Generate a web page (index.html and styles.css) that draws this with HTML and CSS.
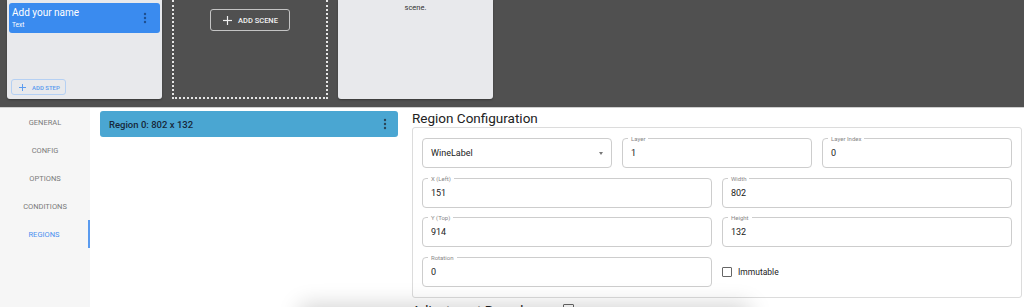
FILE: index.html
```html
<!DOCTYPE html>
<html lang="en">
<head>
  <meta charset="UTF-8">
  <title>Scene Editor</title>
  <link rel="stylesheet" href="styles.css">
</head>
<body>
  <!-- Scenes strip -->
  <div class="scenes">
    <div class="scene-card">
      <div class="step-item">
        <div class="step-text">
          <div class="step-name">Add your name</div>
          <div class="step-type">Text</div>
        </div>
        <svg class="kebab" width="4" height="12" viewBox="0 0 4 12">
          <circle cx="2" cy="2" r="1.2"></circle>
          <circle cx="2" cy="6" r="1.2"></circle>
          <circle cx="2" cy="10" r="1.2"></circle>
        </svg>
      </div>
      <button class="btn-add-step">
        <svg width="7" height="7" viewBox="0 0 10 10" fill="none" stroke="currentColor" stroke-width="1.4">
          <line x1="5" y1="0" x2="5" y2="10"></line>
          <line x1="0" y1="5" x2="10" y2="5"></line>
        </svg>
        <span>ADD STEP</span>
      </button>
    </div>

    <div class="scene-drop">
      <button class="btn-add-scene">
        <svg width="9" height="9" viewBox="0 0 10 10" fill="none" stroke="currentColor" stroke-width="1.3">
          <line x1="5" y1="0" x2="5" y2="10"></line>
          <line x1="0" y1="5" x2="10" y2="5"></line>
        </svg>
        <span>ADD SCENE</span>
      </button>
    </div>

    <div class="scene-card empty">
      <div class="empty-text">Add a step to<br>scene.</div>
    </div>
  </div>

  <!-- Editor -->
  <div class="editor">
    <div class="tabs">
      <div class="tab">GENERAL</div>
      <div class="tab">CONFIG</div>
      <div class="tab">OPTIONS</div>
      <div class="tab">CONDITIONS</div>
      <div class="tab active">REGIONS</div>
    </div>

    <div class="region-list">
      <div class="region-item">
        <span>Region 0: 802 x 132</span>
        <svg class="kebab dark" width="4" height="12" viewBox="0 0 4 12">
          <circle cx="2" cy="2" r="1.2"></circle>
          <circle cx="2" cy="6" r="1.2"></circle>
          <circle cx="2" cy="10" r="1.2"></circle>
        </svg>
      </div>
    </div>

    <div class="region-config">
      <h2 class="section-title">Region Configuration</h2>
      <div class="config-box">
        <div class="row thirds">
          <div class="field select">
            <span class="value">WineLabel</span>
            <span class="arrow"></span>
          </div>
          <div class="field">
            <label>Layer</label>
            <span class="value">1</span>
          </div>
          <div class="field">
            <label>Layer Index</label>
            <span class="value">0</span>
          </div>
        </div>
        <div class="row halves">
          <div class="field">
            <label>X (Left)</label>
            <span class="value">151</span>
          </div>
          <div class="field">
            <label>Width</label>
            <span class="value">802</span>
          </div>
        </div>
        <div class="row halves">
          <div class="field">
            <label>Y (Top)</label>
            <span class="value">914</span>
          </div>
          <div class="field">
            <label>Height</label>
            <span class="value">132</span>
          </div>
        </div>
        <div class="row halves">
          <div class="field">
            <label>Rotation</label>
            <span class="value">0</span>
          </div>
          <div class="checkbox-row">
            <span class="checkbox"></span>
            <span>Immutable</span>
          </div>
        </div>
      </div>
      <div class="boundary">
        <span>Adjustment Boundary:</span>
        <span class="checkbox big"></span>
      </div>
    </div>
  </div>

  <div class="floating-shadow"></div>
</body>
</html>
```

FILE: styles.css
```css
* {
  margin: 0;
  padding: 0;
  box-sizing: border-box;
}

body {
  font-family: Roboto, "Liberation Sans", sans-serif;
  background-color: white;
  color: #222;
  width: 1024px;
  height: 307px;
  overflow: hidden;
}

button {
  font-family: inherit;
  background: none;
  cursor: pointer;
}

/* Scenes strip */
.scenes {
  display: flex;
  gap: 10px;
  height: 108px;
  padding: 0 0 8px 7px;
  background-color: #505050;
  border-bottom: 1px solid #cfcfcf;
}

.scene-card {
  display: flex;
  flex-direction: column;
  justify-content: space-between;
  width: 155px;
  padding: 3px 2px 4px;
  background-color: #e8e9ec;
  border-radius: 0 0 3px 3px;
  box-shadow: 0 1px 2px rgba(0, 0, 0, 0.3);
}

.step-item {
  display: flex;
  justify-content: space-between;
  align-items: center;
  height: 30px;
  padding: 0 13px 0 3px;
  background-color: #3a8bef;
  border-radius: 3px;
  color: white;
}

.step-name {
  font-size: 10px;
  line-height: 13px;
}

.step-type {
  font-size: 6.5px;
  line-height: 10px;
  margin-top: 1px;
}

.kebab {
  fill: #1f4f8f;
}

.kebab.dark {
  fill: #2a4658;
}

.btn-add-step {
  display: flex;
  align-items: center;
  gap: 6px;
  align-self: flex-start;
  height: 16px;
  margin-left: 2px;
  padding: 0 5px 0 7px;
  border: 1px solid #b5d0f3;
  border-radius: 3px;
  color: #5a9bef;
  font-size: 6px;
  font-weight: 500;
}

.scene-drop {
  display: flex;
  justify-content: center;
  align-items: flex-start;
  width: 156px;
  padding-top: 9px;
  border: 2px dotted #e6e6e6;
  border-top: none;
}

.btn-add-scene {
  display: flex;
  align-items: center;
  gap: 6px;
  height: 22px;
  padding: 0 11px 0 12px;
  border: 1px solid #c4c4c4;
  border-radius: 3px;
  color: #f0f0f0;
  font-size: 7.5px;
  font-weight: 500;
}

.scene-card.empty {
  justify-content: flex-start;
  padding-top: 0;
}

.empty-text {
  margin-top: -10px;
  font-size: 7.5px;
  line-height: 12px;
  color: #333;
  text-align: center;
}

/* Editor */
.editor {
  display: flex;
  height: 199px;
}

.tabs {
  width: 90px;
  background-color: #f6f6f6;
}

.tab {
  display: flex;
  justify-content: center;
  align-items: center;
  height: 28px;
  font-size: 7.5px;
  color: #7a7a7a;
}

.tab.active {
  color: #4a8ff0;
  border-right: 2px solid #5a9bef;
}

.region-list {
  width: 322px;
  padding: 3px 14px 0 10px;
}

.region-item {
  display: flex;
  justify-content: space-between;
  align-items: center;
  height: 26px;
  padding: 0 11px 0 9px;
  background-color: #4aa6d2;
  border-radius: 3px;
  font-size: 9.5px;
  font-weight: 500;
  color: #17283a;
}

.region-config {
  flex: 1;
  padding-right: 2px;
}

.section-title {
  font-size: 13.5px;
  font-weight: 400;
  line-height: 18px;
  margin-top: 1px;
}

.config-box {
  display: flex;
  flex-direction: column;
  gap: 9.5px;
  padding: 10px 9px 10px 9px;
  border: 1px solid #dcdcdc;
  border-radius: 3px;
}

.row {
  display: grid;
  gap: 10px;
}

.row.thirds {
  grid-template-columns: repeat(3, 1fr);
}

.row.halves {
  grid-template-columns: repeat(2, 1fr);
}

.field {
  position: relative;
  display: flex;
  justify-content: space-between;
  align-items: center;
  height: 30px;
  padding: 0 8px;
  border: 1px solid #cdcdcd;
  border-radius: 4px;
}

.field label {
  position: absolute;
  top: -4px;
  left: 5px;
  padding: 0 3px;
  background-color: white;
  font-size: 6px;
  line-height: 7px;
  color: #888;
}

.value {
  font-size: 9px;
  color: #222;
}

.arrow {
  width: 0;
  height: 0;
  border-left: 2.5px solid transparent;
  border-right: 2.5px solid transparent;
  border-top: 3px solid #777;
}

.checkbox-row {
  display: flex;
  align-items: center;
  gap: 6px;
  font-size: 8.5px;
  color: #222;
}

.checkbox {
  width: 10px;
  height: 10px;
  border: 1.3px solid #666;
  border-radius: 1px;
}

.boundary {
  display: flex;
  align-items: center;
  gap: 18px;
  margin-top: 3px;
  font-size: 13.5px;
  line-height: 18px;
}

.checkbox.big {
  width: 11px;
  height: 11px;
}

/* Sheet peeking from below the window */
.floating-shadow {
  position: fixed;
  left: 300px;
  bottom: -30px;
  width: 450px;
  height: 30px;
  background-color: white;
  box-shadow: 0 -2px 22px rgba(0, 0, 0, 0.18);
  border-radius: 4px;
}
```
